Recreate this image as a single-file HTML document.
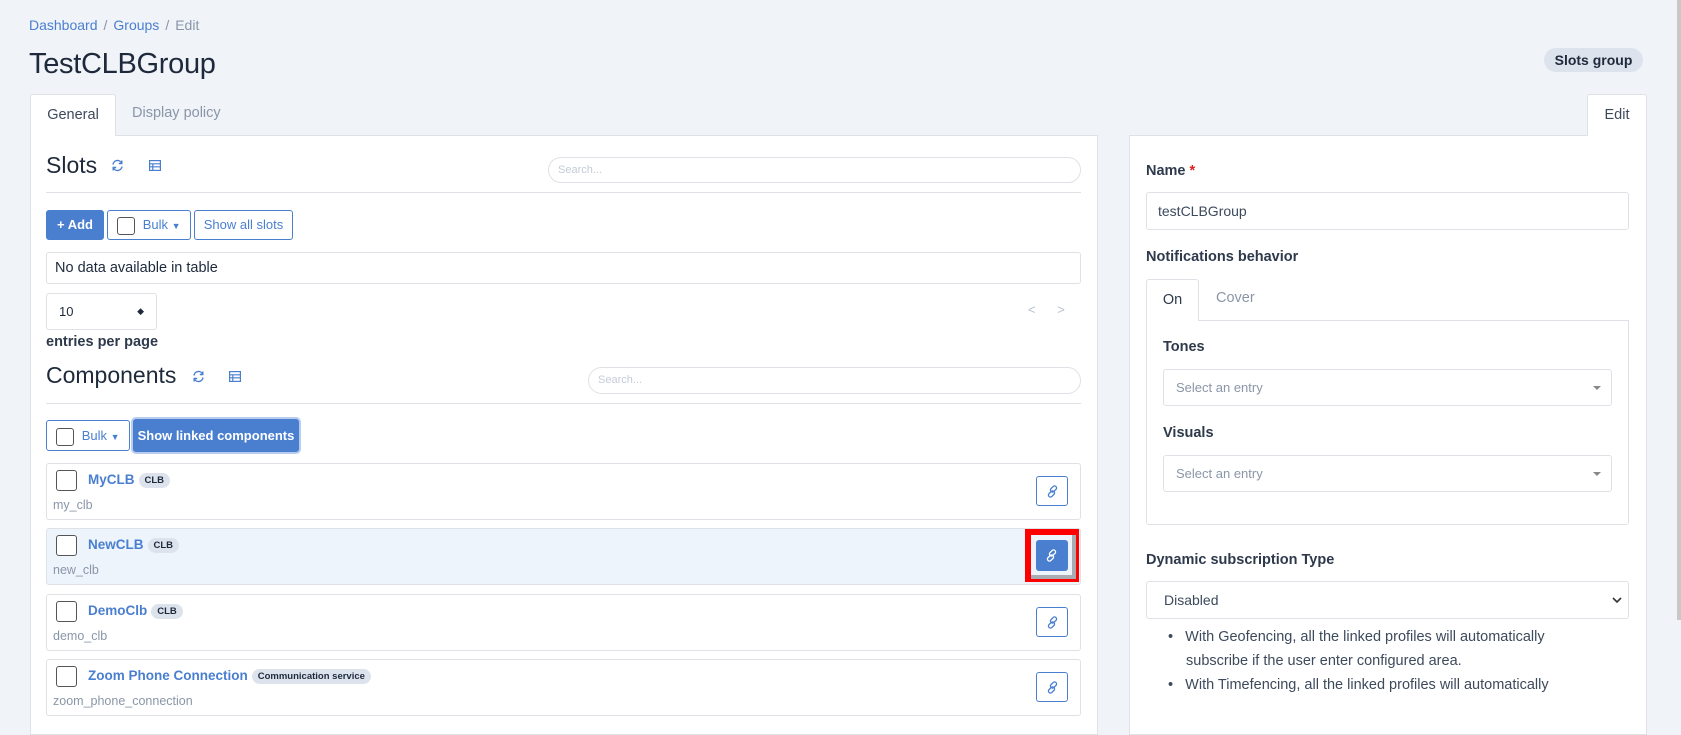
<!DOCTYPE html>
<html><head><meta charset="utf-8"><style>
*{box-sizing:border-box;margin:0;padding:0}
body{width:1681px;height:698px;overflow:hidden;background:#f0f3f8;font-family:"Liberation Sans",sans-serif;color:#1e2a3b;position:relative;font-size:14px}
.a{position:absolute}
.bc{left:29px;top:17px;font-size:14px;color:#4a7fd0}
.bc span{color:#8a96a8;margin:0 6px}
.bc .e{color:#8a96a8;margin:0}
h1{position:absolute;left:29px;top:48px;font-size:29px;font-weight:normal;color:#1e2a3b;letter-spacing:-0.3px}
.badge{background:#dde3ed;border-radius:12px;font-weight:bold;font-size:14px;color:#1e2a3b;text-align:center}
.tab{background:#fff;border:1px solid #dee2e6;border-bottom:none;border-radius:3px 3px 0 0;text-align:center;font-size:14.5px;color:#3d4a5c}
.panel{background:#fff;border:1px solid #dee2e6}
.title{font-size:23px;color:#1e2a3b}
.search{border:1px solid #dee2e6;border-radius:14px;font-size:11px;color:#c4ccd8;padding-left:9px;line-height:24px}
.hr{height:1px;background:#dee2e6}
.btn{border:1px solid #4a7fd0;border-radius:3px;color:#4a7fd0;font-size:13px;line-height:28px;text-align:center}
.btnp{background:#4a7fd0;color:#fff;font-weight:bold}
.cb{display:inline-block;width:18px;height:18px;border:1px solid #555;border-radius:3px;vertical-align:middle;background:#fff}
.row{left:46px;width:1035px;height:57px;border:1px solid #dee2e6;border-radius:3px;background:#fff}
.row .cb{position:absolute;left:9px;top:6px;width:21px;height:21px}
.row .n{position:absolute;left:41px;top:8px;font-size:13.5px;font-weight:bold;color:#4a7fd0}
.row .n i{font-style:normal;display:inline-block;background:#dde3ed;color:#1e2a3b;font-size:9.5px;border-radius:8px;padding:2px 6px;margin-left:4px;vertical-align:1px}
.row .s{position:absolute;left:6px;top:34px;font-size:12.5px;color:#8a96a8}
.lk{position:absolute;left:989px;top:11px;width:32px;height:30px;border:1px solid #4a7fd0;border-radius:3px;background:#fff}
.lk svg{position:absolute;left:9px;top:8px}
.lbl{font-size:14.5px;font-weight:bold;color:#2e3a4c}
.inp{border:1px solid #dee2e6;border-radius:3px;background:#fff;font-size:14px;padding-left:11px}
.sel{border:1px solid #dee2e6;border-radius:3px;background:#fff;font-size:13px;color:#8a96a8;padding-left:12px}
.caret{position:absolute;right:10px;top:16px;border:4px solid transparent;border-top:4px solid #888}
</style></head><body>
<div class="a bc">Dashboard<span>/</span>Groups<span>/</span><b class="e" style="font-weight:normal">Edit</b></div>
<h1>TestCLBGroup</h1>
<div class="a badge" style="left:1544px;top:48px;width:99px;height:24px;line-height:24px">Slots group</div>

<div class="a tab" style="left:30px;top:94px;width:86px;height:42px;line-height:40px;z-index:2">General</div>
<div class="a" style="left:132px;top:105px;font-size:14.5px;color:#8a96a8">Display policy</div>
<div class="a tab" style="left:1587px;top:94px;width:60px;height:42px;line-height:40px;z-index:2">Edit</div>

<div class="a panel" style="left:30px;top:135px;width:1068px;height:600px"></div>
<div class="a panel" style="left:1129px;top:135px;width:518px;height:600px"></div>

<div class="a title" style="left:46px;top:152px">Slots</div>
<svg class="a" style="left:111px;top:159px" width="13" height="13" viewBox="0 0 13 13" fill="none" stroke="#4a7fd0" stroke-width="1.4"><path d="M2 5.5A4.5 4.5 0 0 1 10.5 4M11 7.5A4.5 4.5 0 0 1 2.5 9"/><path d="M10.8 1.5v3h-3M2.2 11.5v-3h3"/></svg>
<svg class="a" style="left:149px;top:160px" width="12" height="11" viewBox="0 0 12 11" fill="none" stroke="#4a7fd0" stroke-width="1.2"><rect x="0.6" y="0.6" width="10.8" height="9.8"/><path d="M0.6 3.8h10.8M0.6 6.8h10.8M3.8 3.8v6.6"/></svg>
<div class="a search" style="left:548px;top:157px;width:533px;height:26px">Search...</div>
<div class="a hr" style="left:46px;top:192px;width:1035px"></div>
<div class="a btn btnp" style="left:46px;top:210px;width:58px;height:30px">+ Add</div>
<div class="a btn" style="left:107px;top:210px;width:84px;height:30px"><span class="cb"></span> &nbsp;Bulk <span style="font-size:9px">▼</span></div>
<div class="a btn" style="left:194px;top:210px;width:99px;height:30px">Show all slots</div>
<div class="a" style="left:46px;top:252px;width:1035px;height:32px;border:1px solid #dee2e6;border-radius:3px;font-size:14.5px;line-height:30px;padding-left:8px">No data available in table</div>
<div class="a" style="left:46px;top:293px;width:111px;height:37px;border:1px solid #dee2e6;border-radius:3px;font-size:13px;line-height:35px;padding-left:12px">10<span style="position:absolute;right:12px;top:0;font-size:9px;line-height:35px">◆</span></div>
<div class="a" style="left:1028px;top:302px;color:#b8c2d0;font-size:13px">&lt;&nbsp;&nbsp;&nbsp;&nbsp;&nbsp;&nbsp;&gt;</div>
<div class="a" style="left:46px;top:334px;font-size:14.5px;font-weight:bold;color:#2e3a4c">entries per page</div>

<div class="a title" style="left:46px;top:362px">Components</div>
<svg class="a" style="left:192px;top:370px" width="13" height="13" viewBox="0 0 13 13" fill="none" stroke="#4a7fd0" stroke-width="1.4"><path d="M2 5.5A4.5 4.5 0 0 1 10.5 4M11 7.5A4.5 4.5 0 0 1 2.5 9"/><path d="M10.8 1.5v3h-3M2.2 11.5v-3h3"/></svg>
<svg class="a" style="left:229px;top:371px" width="12" height="11" viewBox="0 0 12 11" fill="none" stroke="#4a7fd0" stroke-width="1.2"><rect x="0.6" y="0.6" width="10.8" height="9.8"/><path d="M0.6 3.8h10.8M0.6 6.8h10.8M3.8 3.8v6.6"/></svg>
<div class="a search" style="left:588px;top:367px;width:493px;height:27px">Search...</div>
<div class="a hr" style="left:46px;top:403px;width:1035px"></div>
<div class="a btn" style="left:46px;top:420px;width:84px;height:31px;line-height:29px"><span class="cb"></span> &nbsp;Bulk <span style="font-size:9px">▼</span></div>
<div class="a btn btnp" style="left:133px;top:419px;width:166px;height:33px;line-height:31px;box-shadow:0 0 0 2px #b8cdee">Show linked components</div>

<div class="a row" style="top:463px"><span class="cb"></span><div class="n">MyCLB<i>CLB</i></div><div class="s">my_clb</div>
<div class="lk" style="top:12px"><svg width="13" height="13" viewBox="0 0 13 13" fill="none" stroke="#4a7fd0" stroke-width="1.3"><rect x="5.5" y="0.5" width="4" height="7" rx="2" transform="rotate(45 7.5 4)"/><rect x="3.5" y="5.5" width="4" height="7" rx="2" transform="rotate(45 5.5 9)"/></svg></div></div>
<div class="a row" style="top:528px;background:#edf4fc"><span class="cb"></span><div class="n">NewCLB<i>CLB</i></div><div class="s">new_clb</div></div>
<div class="a" style="left:1025px;top:529px;width:54px;height:53px;background:#f00"></div>
<div class="a" style="left:1031px;top:535px;width:45px;height:44px;background:#a8adb3"></div>
<div class="a" style="left:1031px;top:535px;width:41px;height:40px;background:#edf4fc"></div>
<div class="a" style="left:1036px;top:540px;width:32px;height:31px;background:#4a7fd0;border-radius:3px"><svg style="position:absolute;left:9px;top:9px" width="13" height="13" viewBox="0 0 13 13" fill="none" stroke="#fff" stroke-width="1.3"><rect x="5.5" y="0.5" width="4" height="7" rx="2" transform="rotate(45 7.5 4)"/><rect x="3.5" y="5.5" width="4" height="7" rx="2" transform="rotate(45 5.5 9)"/></svg></div>
<div class="a row" style="top:594px"><span class="cb"></span><div class="n">DemoClb<i>CLB</i></div><div class="s">demo_clb</div>
<div class="lk" style="top:12px"><svg width="13" height="13" viewBox="0 0 13 13" fill="none" stroke="#4a7fd0" stroke-width="1.3"><rect x="5.5" y="0.5" width="4" height="7" rx="2" transform="rotate(45 7.5 4)"/><rect x="3.5" y="5.5" width="4" height="7" rx="2" transform="rotate(45 5.5 9)"/></svg></div></div>
<div class="a row" style="top:659px"><span class="cb"></span><div class="n">Zoom Phone Connection<i>Communication service</i></div><div class="s">zoom_phone_connection</div>
<div class="lk" style="top:12px"><svg width="13" height="13" viewBox="0 0 13 13" fill="none" stroke="#4a7fd0" stroke-width="1.3"><rect x="5.5" y="0.5" width="4" height="7" rx="2" transform="rotate(45 7.5 4)"/><rect x="3.5" y="5.5" width="4" height="7" rx="2" transform="rotate(45 5.5 9)"/></svg></div></div>

<div class="a lbl" style="left:1146px;top:163px">Name <span style="color:#e02020">*</span></div>
<div class="a inp" style="left:1146px;top:192px;width:483px;height:38px;line-height:36px;color:#3d4a5c">testCLBGroup</div>
<div class="a lbl" style="left:1146px;top:249px">Notifications behavior</div>
<div class="a" style="left:1146px;top:320px;width:483px;height:205px;border:1px solid #dee2e6;border-radius:0 0 3px 3px"></div>
<div class="a tab" style="left:1146px;top:279px;width:53px;height:42px;line-height:40px;z-index:2;color:#2e3a4c">On</div>
<div class="a" style="left:1216px;top:290px;font-size:14.5px;color:#8a96a8">Cover</div>
<div class="a lbl" style="left:1163px;top:339px">Tones</div>
<div class="a sel" style="left:1163px;top:369px;width:449px;height:37px;line-height:35px">Select an entry<span class="caret"></span></div>
<div class="a lbl" style="left:1163px;top:425px">Visuals</div>
<div class="a sel" style="left:1163px;top:455px;width:449px;height:37px;line-height:35px">Select an entry<span class="caret"></span></div>
<div class="a lbl" style="left:1146px;top:552px">Dynamic subscription Type</div>
<div class="a inp" style="left:1146px;top:581px;width:483px;height:38px;line-height:36px;color:#3d4a5c;padding-left:17px">Disabled<svg style="position:absolute;right:6px;top:14px" width="10" height="8" viewBox="0 0 10 8" fill="none" stroke="#333" stroke-width="1.6"><path d="M1 2l4 4 4-4"/></svg></div>
<div class="a" style="left:1168px;top:625px;font-size:14.5px;color:#3d4a5c;line-height:24px">
<div>•&nbsp;&nbsp;&nbsp;With Geofencing, all the linked profiles will automatically</div>
<div style="padding-left:18px">subscribe if the user enter configured area.</div>
<div>•&nbsp;&nbsp;&nbsp;With Timefencing, all the linked profiles will automatically</div>
</div>
<div class="a" style="left:1677px;top:0;width:4px;height:620px;background:#c8c8c8"></div>
</body></html>
